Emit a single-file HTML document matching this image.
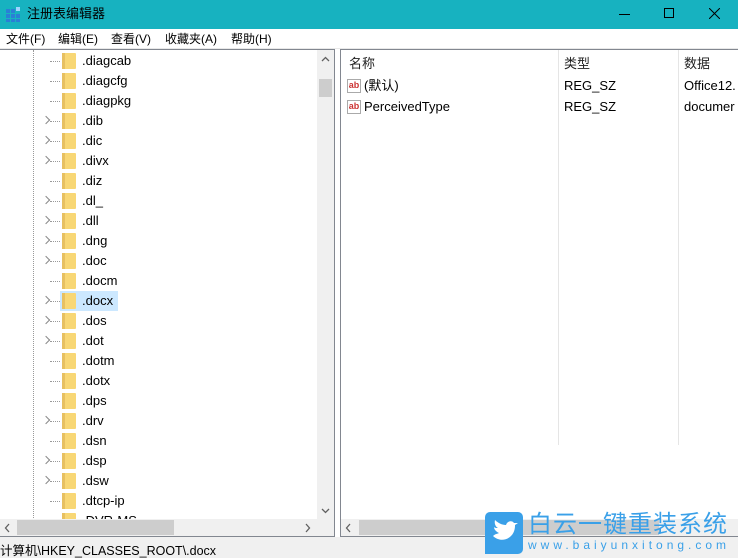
<!DOCTYPE html>
<html><head><meta charset="utf-8"><style>
*{margin:0;padding:0;box-sizing:border-box}
body{width:738px;height:558px;overflow:hidden;background:#fff;font-family:"Liberation Sans","Noto Sans CJK SC",sans-serif;font-size:13px;color:#000;position:relative}
.abs{position:absolute}
#title{left:0;top:0;width:738px;height:29px;background:#17b2c0}
#menu{left:0;top:29px;width:738px;height:20px;background:#fff;border-bottom:1px solid #e8e8e8}
#menu span{position:absolute;top:2px;font-size:12px;line-height:16px}
#left{left:0;top:49px;width:335px;height:488px;border:1px solid #828790;border-left:none;overflow:hidden}
#right{left:340px;top:49px;width:398px;height:488px;border:1px solid #828790;border-right:none;overflow:hidden}
#right span{line-height:16px}
.row{position:absolute;left:0;height:20px;width:316px}
.row .t{position:absolute;left:82px;top:2px;font-size:13px}
.row .f{position:absolute;left:62px;top:2px;width:14px;height:16px;background:#f8d775;border-radius:1px}
.row .f:after{content:"";position:absolute;left:0;top:0;width:3px;height:16px;background:#e7c061}
.row .h{position:absolute;left:50px;top:10px;width:10px;border-top:1px dotted #999}
.row .a{position:absolute;left:43px;top:6px;width:6px;height:6px;border-right:1.3px solid #888;border-top:1.3px solid #888;transform:rotate(45deg)}
.sel{background:#cce8ff;position:absolute;left:60px;top:0;width:58px;height:20px}
#status{left:0;top:537px;width:738px;height:21px;background:#f0f0f0;font-size:12.5px;padding:3px 0 0 0}
.sbt{background:#f0f0f0}
</style></head><body>
<div id="title" class="abs">
  <svg class="abs" style="left:6px;top:7px" width="15" height="15"><g fill="#2a7fd6"><rect x="0" y="2" width="4" height="4"/><rect x="5" y="2" width="4" height="4"/><rect x="0" y="7" width="4" height="4"/><rect x="5" y="7" width="4" height="4"/><rect x="10" y="7" width="4" height="4"/><rect x="0" y="12" width="4" height="3"/><rect x="5" y="12" width="4" height="3"/><rect x="10" y="12" width="4" height="3"/></g><rect x="10" y="0" width="4" height="4" fill="#9fd4ff"/></svg>
  <span class="abs" style="left:27px;top:5px;font-size:13px;line-height:17px">注册表编辑器</span>
  <div class="abs" style="left:619px;top:14px;width:11px;border-top:1px solid #000"></div>
  <div class="abs" style="left:664px;top:8px;width:10px;height:10px;border:1px solid #000"></div>
  <svg class="abs" style="left:709px;top:8px" width="11" height="11"><path d="M0 0L11 11M11 0L0 11" stroke="#000" stroke-width="1"/></svg>
</div>
<div id="menu" class="abs">
  <span style="left:6px">文件(F)</span><span style="left:58px">编辑(E)</span><span style="left:111px">查看(V)</span><span style="left:165px">收藏夹(A)</span><span style="left:231px">帮助(H)</span>
</div>
<div id="left" class="abs">
  <div class="abs" style="left:33px;top:0;height:470px;border-left:1px dotted #999"></div>
  <div id="rows"></div>
  <div class="abs sbt" style="left:317px;top:0;width:17px;height:469px"></div>
  <div class="abs" style="left:319px;top:29px;width:13px;height:18px;background:#cdcdcd"></div>
  <svg class="abs" style="left:321px;top:6px" width="9" height="6"><path d="M1 5L4.5 1.5L8 5" stroke="#606060" fill="none" stroke-width="1.3"/></svg>
  <svg class="abs" style="left:321px;top:458px" width="9" height="6"><path d="M1 1L4.5 4.5L8 1" stroke="#606060" fill="none" stroke-width="1.3"/></svg>
  <div class="abs sbt" style="left:0;top:469px;width:334px;height:18px"></div>
  <div class="abs" style="left:17px;top:470px;width:157px;height:15px;background:#cdcdcd"></div>
  <svg class="abs" style="left:4px;top:473px" width="6" height="10"><path d="M5 1L1.5 5L5 9" stroke="#606060" fill="none" stroke-width="1.3"/></svg>
  <svg class="abs" style="left:305px;top:473px" width="6" height="10"><path d="M1 1L4.5 5L1 9" stroke="#606060" fill="none" stroke-width="1.3"/></svg>
</div>
<div id="right" class="abs">
  <div class="abs" style="left:217px;top:0;height:395px;border-left:1px solid #e5e5e5"></div>
  <div class="abs" style="left:337px;top:0;height:395px;border-left:1px solid #e5e5e5"></div>
  <span class="abs" style="left:8px;top:6px;color:#222">名称</span>
  <span class="abs" style="left:223px;top:6px;color:#222">类型</span>
  <span class="abs" style="left:343px;top:6px;color:#222">数据</span>
  <div class="abs" style="left:6px;top:29px;width:14px;height:14px;border:1px solid #aaa;background:#fff;color:#c33;font-size:9px;font-weight:bold;line-height:11px;text-align:center">ab</div>
  <span class="abs" style="left:23px;top:28px">(默认)</span>
  <span class="abs" style="left:223px;top:28px">REG_SZ</span>
  <span class="abs" style="left:343px;top:28px">Office12.</span>
  <div class="abs" style="left:6px;top:50px;width:14px;height:14px;border:1px solid #aaa;background:#fff;color:#c33;font-size:9px;font-weight:bold;line-height:11px;text-align:center">ab</div>
  <span class="abs" style="left:23px;top:49px">PerceivedType</span>
  <span class="abs" style="left:223px;top:49px">REG_SZ</span>
  <span class="abs" style="left:343px;top:49px">documer</span>
  <div class="abs sbt" style="left:0;top:469px;width:398px;height:18px"></div>
  <div class="abs" style="left:18px;top:470px;width:300px;height:15px;background:#cdcdcd"></div>
  <svg class="abs" style="left:4px;top:473px" width="6" height="10"><path d="M5 1L1.5 5L5 9" stroke="#606060" fill="none" stroke-width="1.3"/></svg>
</div>
<div id="status" class="abs">计算机\HKEY_CLASSES_ROOT\.docx</div>
<div class="abs" style="left:485px;top:512px;width:38px;height:42px;background:#3aa0e8;border-radius:5px 5px 5px 0">
  <svg width="38" height="42"><path d="M8 24C12 28 20 30 26 24C30 20 30 15 30 13L33 11L29 11C27 8 22 9 21 13C17 13 13 11 10 8C9 12 11 15 13 16C11 16 10 16 9 15C9 18 12 20 14 21C12 22 10 22 8 24Z" fill="#fff"/></svg>
</div>
<span class="abs" style="left:528px;top:511px;font-size:24px;color:#3aa0e8;letter-spacing:1px;line-height:28px">白云一键重装系统</span>
<span class="abs" style="left:528px;top:538px;font-size:12px;color:#3aa0e8;letter-spacing:4px">www.baiyunxitong.com</span>
<script>
var n=["diagcab","diagcfg","diagpkg","dib","dic","divx","diz","dl_","dll","dng","doc","docm","docx","dos","dot","dotm","dotx","dps","drv","dsn","dsp","dsw","dtcp-ip","DVR-MS"];
var a={dib:1,dic:1,divx:1,dl_:1,dll:1,dng:1,doc:1,docx:1,dos:1,dot:1,drv:1,dsp:1,dsw:1};
var h="";
n.forEach(function(x,i){var y=1+20*i;h+='<div class="row" style="top:'+y+'px">'+(x=="docx"?'<div class="sel"></div>':'')+'<div class="h"></div>'+(a[x]?'<div class="a"></div>':'')+'<div class="f"></div><span class="t">.'+x+'</span></div>';});
document.getElementById("rows").innerHTML=h;
</script>
</body></html>
